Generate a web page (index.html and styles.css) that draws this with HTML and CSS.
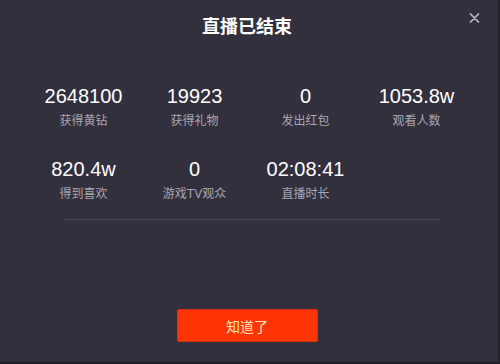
FILE: index.html
```html
<!DOCTYPE html>
<html lang="zh-CN">
<head>
<meta charset="utf-8">
<link rel="stylesheet" href="styles.css">
</head>
<body>
<div class="dialog">
  <h1 class="title">直播已结束</h1>
  <button class="close" aria-label="关闭">
    <svg width="11" height="10" viewBox="0 0 11 10"><path d="M1.5 1L9.5 9M9.5 1L1.5 9" stroke="#bdbbc7" stroke-width="1.7" stroke-linecap="round"/></svg>
  </button>
  <div class="stats">
    <div class="stat"><div class="num">2648100</div><div class="label">获得黄钻</div></div>
    <div class="stat"><div class="num">19923</div><div class="label">获得礼物</div></div>
    <div class="stat"><div class="num">0</div><div class="label">发出红包</div></div>
    <div class="stat"><div class="num">1053.8w</div><div class="label">观看人数</div></div>
    <div class="stat"><div class="num">820.4w</div><div class="label">得到喜欢</div></div>
    <div class="stat"><div class="num">0</div><div class="label">游戏TV观众</div></div>
    <div class="stat"><div class="num">02:08:41</div><div class="label">直播时长</div></div>
  </div>
  <div class="divider"></div>
  <div class="actions"><button class="ok">知道了</button></div>
</div>
</body>
</html>
```
FILE: styles.css
```css
* { box-sizing: border-box; }
html, body { margin: 0; padding: 0; background: #33303e; }
body { font-family: "Liberation Sans", "Noto Sans CJK SC", sans-serif; }
.dialog {
  position: relative;
  width: 500px;
  height: 364px;
  background: #33303e;
  border-right: 2px solid #25232e;
  border-bottom: 2px solid #1e1c26;
  display: flex;
  flex-direction: column;
}
.title {
  margin: 15px 0 0;
  text-align: center;
  font-size: 18px;
  line-height: 24px;
  font-weight: bold;
  color: #ffffff;
  padding-right: 4px;
}
.close {
  position: absolute;
  top: 13px;
  right: 18px;
  width: 11px;
  height: 10px;
  padding: 0;
  border: 0;
  background: none;
  display: flex;
}
.stats {
  margin: 45px 0 0 28px;
  width: 444px;
  display: grid;
  grid-template-columns: repeat(4, 1fr);
  row-gap: 28px;
}
.stat { text-align: center; }
.num {
  font-size: 20px;
  line-height: 24px;
  color: #ffffff;
}
.label {
  margin-top: 5px;
  font-size: 12px;
  line-height: 16px;
  color: #a9a6b3;
}
.divider {
  margin: 17px 0 0 64px;
  width: 376px;
  height: 1px;
  background: #4a4757;
}
.actions {
  margin-top: 89px;
  display: flex;
  justify-content: center;
  padding-left: 1px;
  padding-right: 5px;
}
.ok {
  width: 141px;
  height: 33px;
  border: 1px solid #d9300f;
  border-radius: 2px;
  background: #ff3405;
  color: #fde6c0;
  font-family: "Noto Sans CJK SC", sans-serif;
  font-size: 14px;
  padding: 0;
}
```
